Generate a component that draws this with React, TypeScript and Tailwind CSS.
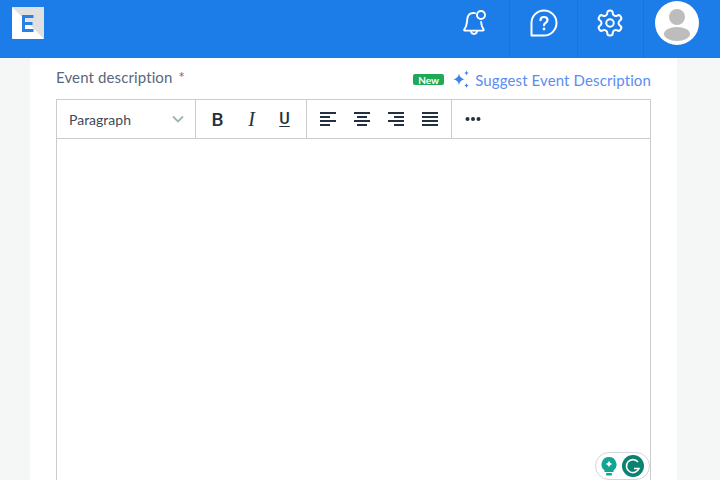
import React from "react";

const Lines = ({ kind }: { kind: "left" | "center" | "right" | "justify" }) => {
  const rows: Record<string, [number, number][]> = {
    left: [[0, 16], [0, 10], [0, 16], [0, 10]],
    center: [[0, 16], [3, 10], [0, 16], [3, 10]],
    right: [[0, 16], [6, 10], [0, 16], [6, 10]],
    justify: [[0, 16], [0, 16], [0, 16], [0, 16]],
  };
  return (
    <svg width="16" height="14" viewBox="0 0 16 14" fill="#22303f">
      {rows[kind].map(([x, w], i) => (
        <rect key={i} x={x} y={i * 4} width={w} height="2" />
      ))}
    </svg>
  );
};

export default function App() {
  return (
    <div className="h-[480px] w-[720px] overflow-hidden bg-[#f5f7f6] font-['Lato',sans-serif]">
      <header className="flex h-[58px] items-start justify-between bg-[#1c7ce8]">
        <div className="ml-3 mt-[7px] h-8 w-8 overflow-hidden rounded-[1px]">
          <svg width="32" height="32" viewBox="0 0 32 32">
            <rect width="32" height="32" fill="#fff" />
            <polygon points="0,0 32,0 32,32" fill="#e0e0e0" />
            <path d="M11 9.500h10.500M11 16.500h9.500M11 23.500h10.500M11.500 8v17" stroke="#2b80e6" strokeWidth="3" fill="none" />
          </svg>
        </div>
        <div className="flex h-[58px] items-start">
          <div className="flex h-[58px] w-[68px] items-start justify-center border-r border-[#1a74d8] pt-[9px]">
            <svg className="-ml-1" width="28" height="28" viewBox="0 0 28 28" fill="none" stroke="#fff" strokeWidth="1.900" strokeLinecap="round" strokeLinejoin="round">
              <path d="M15 4.200C10 3 7.600 6.400 7.300 10c-.3 4-.6 7.500-3 10.400-.5.8 0 1.200.8 1.200h17.600c.9 0 1.300-.5.8-1.200-1.700-2.200-2.200-4.600-2.400-7.400" />
              <path d="M11 22c.2 2 1.500 3 3 3s2.800-1 3-3" />
              <circle cx="21" cy="6" r="4" />
            </svg>
          </div>
          <div className="flex h-[58px] w-[68px] items-start justify-center border-r border-[#1a74d8] pt-[9px]">
            <svg width="28" height="28" viewBox="0 0 28 28" fill="none">
              <path d="M1.500 26.500V14A12.500 12.500 0 1 1 14 26.500Z" stroke="#fff" strokeWidth="2" strokeLinejoin="round" />
              <path d="M10.500 11.200c0-2 1.500-3.200 3.500-3.200s3.500 1.200 3.500 3c0 2.800-3.500 2.800-3.500 5.200" stroke="#fff" strokeWidth="2.200" strokeLinecap="round" />
              <circle cx="14" cy="20" r="1.400" fill="#fff" />
            </svg>
          </div>
          <div className="flex h-[58px] w-[66px] items-start justify-center border-r border-[#1a74d8] pt-2">
            <svg className="-ml-[2px]" width="30" height="30" viewBox="0 0 24 24" fill="none" stroke="#fff" strokeWidth="1.600" strokeLinecap="round" strokeLinejoin="round">
              <path d="M12.220 2h-.44a2 2 0 0 0-2 2v.18a2 2 0 0 1-1 1.730l-.43.250a2 2 0 0 1-2 0l-.15-.080a2 2 0 0 0-2.730.730l-.220.380a2 2 0 0 0 .730 2.730l.150.100a2 2 0 0 1 1 1.720v.510a2 2 0 0 1-1 1.740l-.150.090a2 2 0 0 0-.730 2.730l.220.380a2 2 0 0 0 2.730.730l.150-.080a2 2 0 0 1 2 0l.43.250a2 2 0 0 1 1 1.730V20a2 2 0 0 0 2 2h.44a2 2 0 0 0 2-2v-.18a2 2 0 0 1 1-1.730l.43-.250a2 2 0 0 1 2 0l.15.080a2 2 0 0 0 2.730-.730l.220-.390a2 2 0 0 0-.730-2.730l-.150-.080a2 2 0 0 1-1-1.740v-.500a2 2 0 0 1 1-1.740l.150-.090a2 2 0 0 0 .730-2.730l-.220-.380a2 2 0 0 0-2.730-.730l-.150.080a2 2 0 0 1-2 0l-.43-.250a2 2 0 0 1-1-1.730V4a2 2 0 0 0-2-2z" />
              <circle cx="12" cy="12" r="3" />
            </svg>
          </div>
          <div className="ml-[11px] mr-[21px] mt-px flex h-11 w-11 items-center justify-center rounded-full bg-white">
            <svg width="44" height="44" viewBox="0 0 44 44" fill="#bdbdbd">
              <circle cx="22" cy="16" r="8" />
              <ellipse cx="22" cy="33" rx="13" ry="7" />
            </svg>
          </div>
        </div>
      </header>
      <main className="ml-[30px] h-[422px] w-[647px] bg-white pl-[26px] pr-[26px]">
        <div className="flex h-[41px] items-start justify-between">
          <div className="mt-[10px] flex items-center text-[15px] leading-[18px] tracking-[0.12px] text-[#59687a]">
            Event description
            <span className="ml-[6px] text-[#c0504d]">*</span>
          </div>
          <div className="mt-[12px] flex items-center">
            <span className="flex h-[11px] w-[31px] items-center justify-center rounded-[2px] bg-[#1fa855] text-[10px] font-bold leading-none text-white">New</span>
            <svg className="ml-[8px]" width="19" height="19" viewBox="0 0 19 19" fill="#3b82ef">
              <path d="M7 3.500c.6 3.300 2.200 5 5.500 5.800C9.200 10 7.600 11.700 7 15c-.6-3.300-2.200-5-5.500-5.700C4.800 8.500 6.400 6.800 7 3.500Z" />
              <path d="M14.500 0.500c.3 1.500 1 2.200 2.500 2.500-1.500.3-2.200 1-2.500 2.500-.3-1.500-1-2.200-2.500-2.500 1.500-.3 2.200-1 2.500-2.500Z" />
              <path d="M14.500 13c.3 1.500 1 2.200 2.500 2.500-1.500.3-2.200 1-2.500 2.500-.3-1.500-1-2.200-2.500-2.500 1.500-.3 2.200-1 2.500-2.500Z" />
            </svg>
            <span className="ml-[4px] text-[15px] leading-[18px] tracking-[0.12px] text-[#5b8def]">Suggest Event Description</span>
          </div>
        </div>
        <div className="relative h-[400px] border border-[#cccccc]">
          <div className="flex h-[39px] items-stretch border-b border-[#cccccc] text-[#22303f]">
            <div className="flex w-[139px] items-center justify-between border-r border-[#cccccc] pl-3 pr-[10px]">
              <span className="text-[14px] text-[#3c4a5a]">Paragraph</span>
              <svg width="14" height="14" viewBox="0 0 14 14" fill="none" stroke="#9db5b5" strokeWidth="1.800"><path d="M2 4.500l5 5 5-5" /></svg>
            </div>
            <div className="flex w-[111px] items-center gap-[17px] border-r border-[#cccccc] pl-[13px]">
              <span className="w-[17px] text-center font-['Roboto',sans-serif] text-[19px] font-medium leading-none">B</span>
              <span className="w-[17px] text-center font-['Liberation_Serif',serif] text-[20px] italic leading-none">I</span>
              <span className="-ml-[1px] w-[17px] text-center font-['Roboto',sans-serif] text-[16px] font-medium leading-none underline underline-offset-2">U</span>
            </div>
            <div className="flex w-[145px] items-center gap-[18px] border-r border-[#cccccc] pl-[13px]">
              <Lines kind="left" />
              <Lines kind="center" />
              <Lines kind="right" />
              <Lines kind="justify" />
            </div>
            <div className="flex items-center pl-[13px]">
              <svg width="16" height="6" viewBox="0 0 16 6" fill="#22303f">
                <circle cx="2.500" cy="3" r="2" />
                <circle cx="8" cy="3" r="2" />
                <circle cx="13.500" cy="3" r="2" />
              </svg>
            </div>
          </div>
          <div className="absolute left-[538px] top-[352px] flex h-7 w-[55px] items-center justify-center gap-[5px] rounded-full border border-[#d5d5de] bg-white">
            <svg width="16" height="19" viewBox="0 0 16 19">
              <path d="M8 0a7.500 7.500 0 0 1 4.500 13.500V15h-9v-1.500A7.500 7.500 0 0 1 8 0Z" fill="#12a594" />
              <rect x="5" y="16" width="6" height="2.500" rx="1" fill="#12a594" />
              <path d="M8 3.500c.4 2 1.400 3.100 3.500 3.500-2.100.4-3.100 1.500-3.500 3.500-.4-2-1.400-3.100-3.500-3.500 2.100-.4 3.100-1.500 3.500-3.500Z" fill="#fff" />
            </svg>
            <svg width="22" height="22" viewBox="0 0 22 22">
              <circle cx="11" cy="11" r="11" fill="#0b8270" />
              <path d="M16 7a6.500 6.500 0 1 0 1 6.500h-5" fill="none" stroke="#fff" strokeWidth="1.600" />
            </svg>
          </div>
        </div>
      </main>
    </div>
  );
}
